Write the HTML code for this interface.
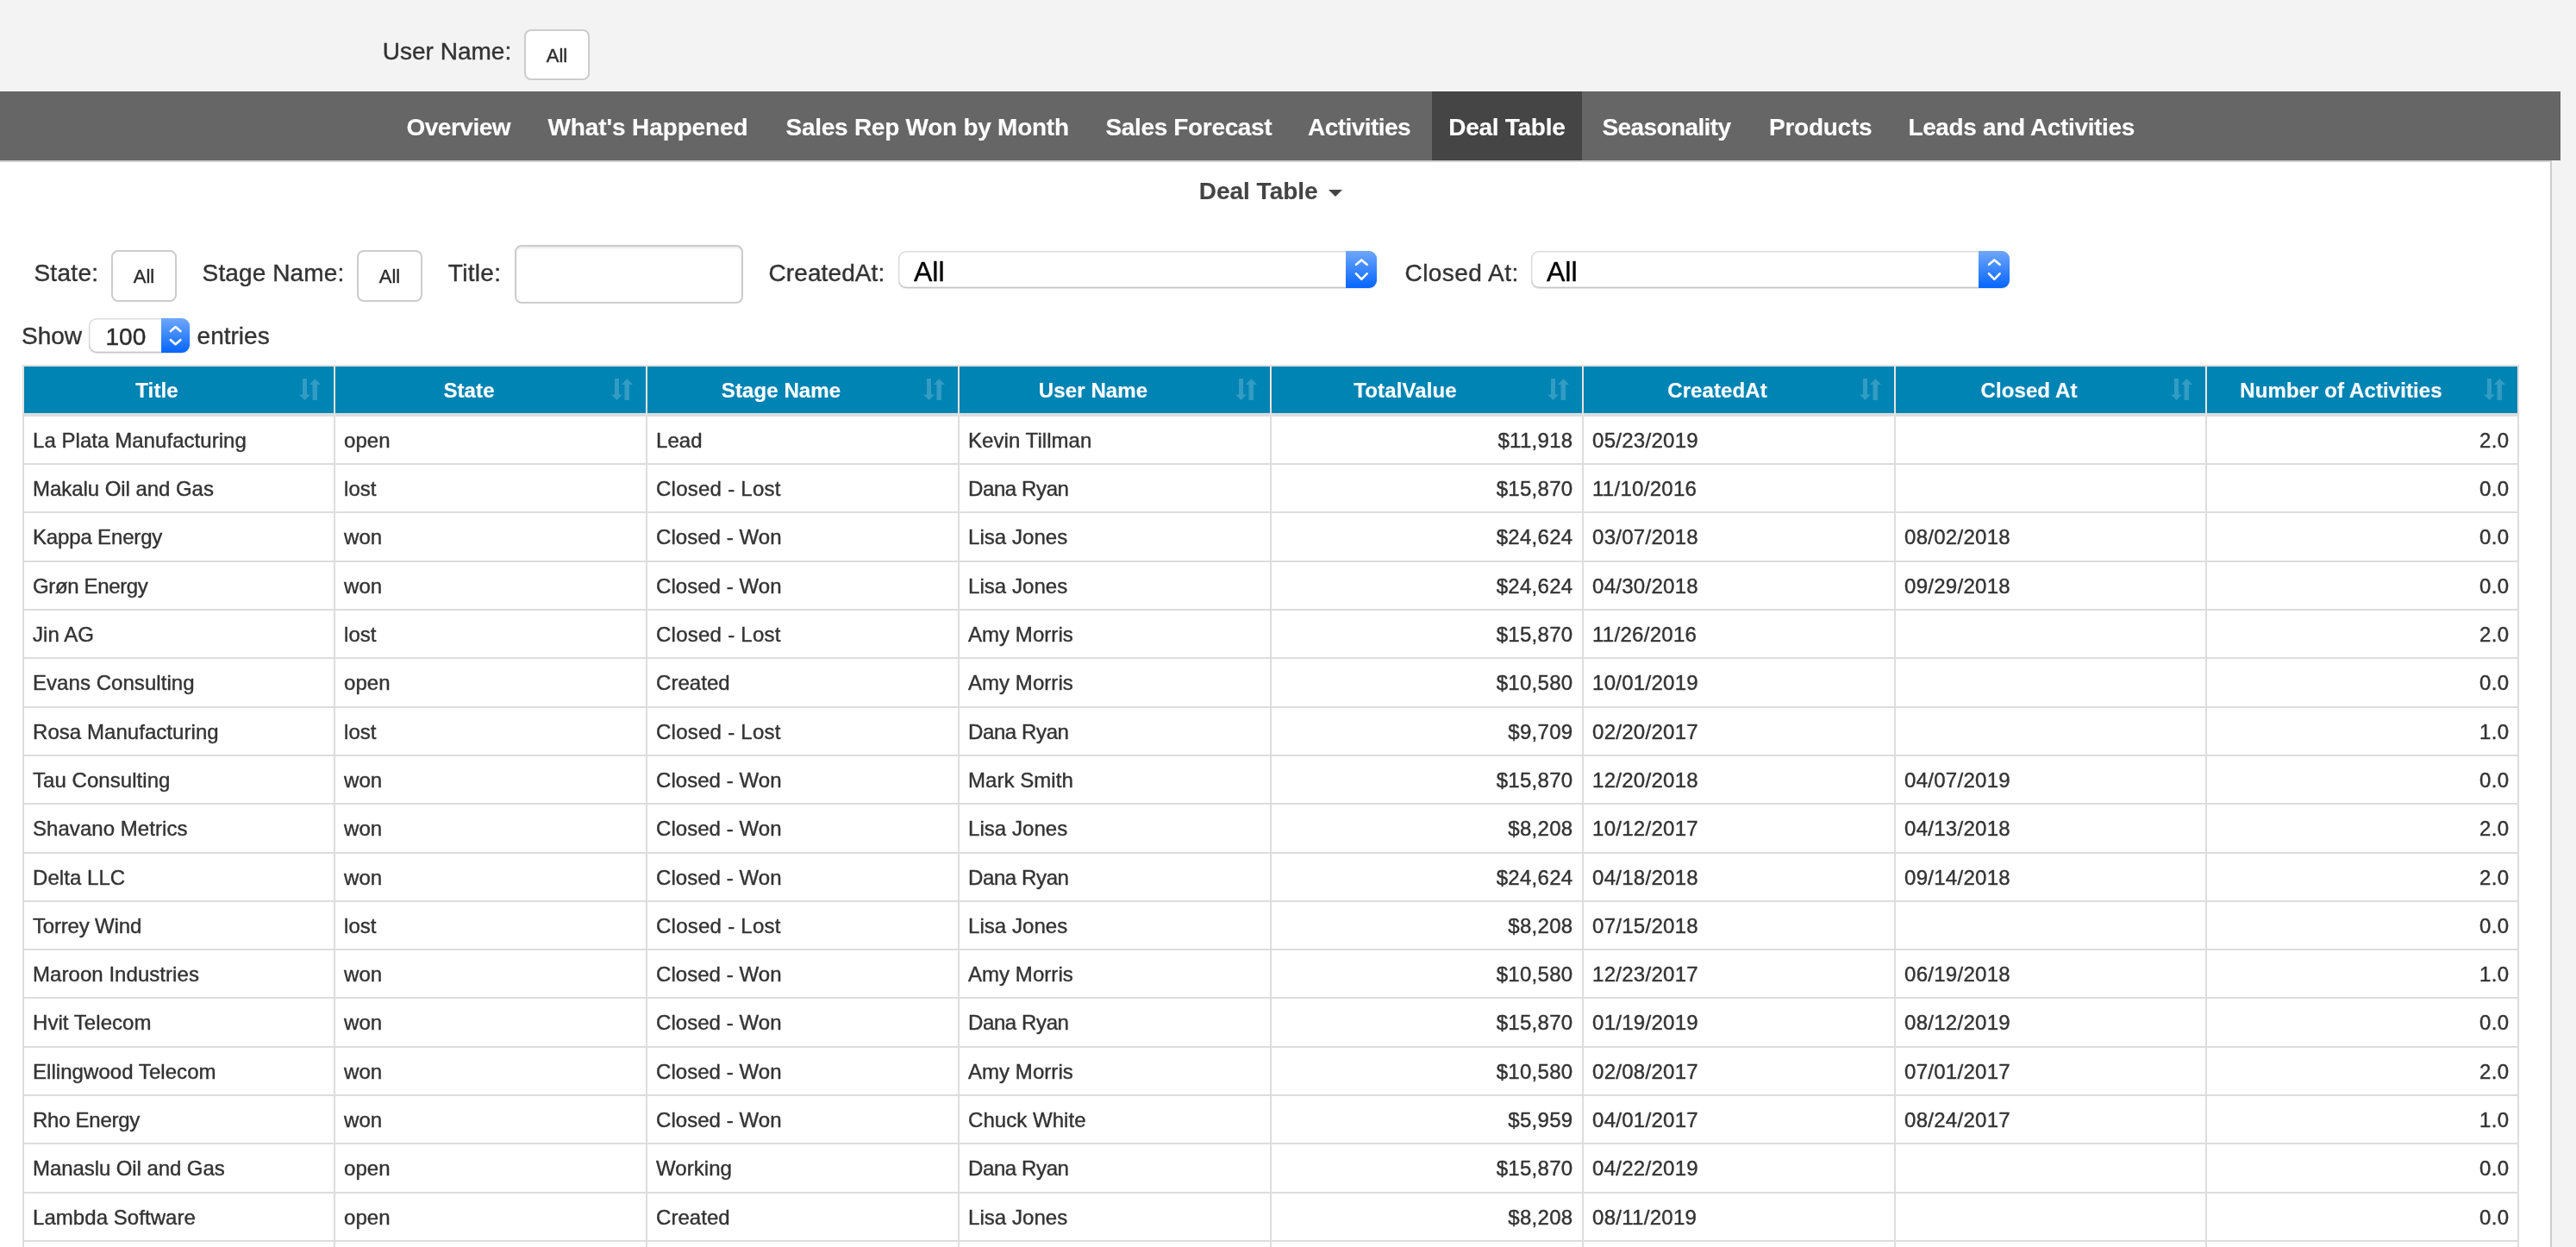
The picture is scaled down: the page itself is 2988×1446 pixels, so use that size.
<!DOCTYPE html>
<html lang="en"><head><meta charset="utf-8"><title>Deal Table</title>
<style>
*{box-sizing:border-box}
html,body{margin:0;padding:0}
body{width:2988px;height:1446px;overflow:hidden;background:#f3f3f3;font-family:"Liberation Sans",sans-serif;color:#333;position:relative;-webkit-text-stroke:0.4px currentColor}
.top{position:absolute;left:0;top:0;width:2988px;height:106px;will-change:transform}
.lbl{position:absolute;font-size:28px;line-height:28px;white-space:nowrap;color:#333}
.btn{position:absolute;width:76px;height:60px;border:2px solid #ccc;border-radius:8px;background:#fff;font-size:22px;line-height:22px;padding-top:17.9px;text-align:center;color:#2b2b2b}
.nav{position:absolute;left:0;top:106px;width:2970px;height:80px;background:#666;will-change:transform}
.ni{position:absolute;top:0;height:80px;padding:0 20px;font-size:28px;font-weight:700;line-height:83px;overflow:hidden;color:#fff;white-space:nowrap;letter-spacing:-0.45px;-webkit-text-stroke:.12px #fff}
.ni.act{background:#454545}
.panel{position:absolute;left:0;top:186px;width:2960px;height:1270px;background:#fff;border-top:2px solid #d2d2d2;border-right:2px solid #ccc}
.content{position:absolute;left:0;top:0;width:2960px;height:1446px;will-change:transform}
.ttl{position:absolute;left:1390.7px;top:207.5px;font-size:28px;font-weight:700;line-height:28px;color:#444;white-space:nowrap;-webkit-text-stroke:.12px #444}
.caret{position:absolute;left:150.3px;top:12.5px;width:0;height:0;border-left:8px solid transparent;border-right:8px solid transparent;border-top:8px solid #444}
.inp{position:absolute;width:265px;height:68px;border:2px solid #ccc;border-radius:8px;background:#fff;box-shadow:inset 0 2px 2px rgba(0,0,0,.075)}
.sel{position:absolute;background:#fff;border-radius:9px;box-shadow:inset 0 -1px 0 #c4c4c4,inset 0 0 0 1.5px #dcdcdc,0 1px 1.5px rgba(0,0,0,.12)}
.sel.big{width:555px;height:43px}
.sel.sm{width:117px;height:40px}
.sel .sv{position:absolute;white-space:nowrap}
.sel.big .sv{left:18px;top:7.5px;font-size:32px;line-height:32px;color:#000}
.sel.sm .sv{left:19.5px;top:8.2px;font-size:28px;line-height:28px;color:#2b2b2b}
.chev{position:absolute;right:0;top:0;width:36px;height:43px;border-radius:0 9px 9px 0;background:linear-gradient(#6fa7fb,#0565ff);overflow:hidden}
.chev.s{width:33px;height:40px}
.chev svg{position:absolute;left:0;top:0}
.chev path{fill:none;stroke:#fff;stroke-width:2.6;stroke-linecap:round;stroke-linejoin:round}
table.dt{position:absolute;left:26px;top:423px;width:2896px;border-collapse:separate;border-spacing:0;table-layout:fixed;font-size:24px;line-height:37px;color:#333}
.dt th,.dt td{border:0 solid #ddd;border-right-width:2px;border-bottom-width:2px;padding:0 10.6px 0 10px;letter-spacing:.05px;white-space:nowrap;overflow:hidden;text-align:left;font-weight:400;vertical-align:middle}
.dt th:first-child,.dt td:first-child{border-left-width:2px}
.dt th{height:60px;padding-top:1px;background:#0084b4;color:#fff;font-weight:700;text-align:center;padding-left:10px;padding-right:60px;position:relative;border-top:1px solid #ddd;border-bottom-width:4px;border-right-color:#ebe4e0;border-bottom-color:#ddd;box-shadow:inset 0 1px 0 #ebe4e0;letter-spacing:.1px;-webkit-text-stroke:.18px #fff}
.dt th:first-child{border-left:1px solid #ddd;box-shadow:inset 1px 1px 0 #ebe4e0}
.dt th:last-child{border-right:1px solid #ddd;box-shadow:inset -1px 1px 0 #ebe4e0}
.dt tr.h56 td{height:56px}
.dt tr.h57 td{height:57px}
.dt td.r{text-align:right}
.dt td.n{letter-spacing:.28px}
.dt td.r:last-child{padding-right:9.7px}
.srt{position:absolute;right:15px;top:15px;fill:rgba(255,255,255,.2)}

</style></head>
<body>
<div class="top"><span class="lbl" style="left:443.8px;top:45.5px">User Name:</span><span class="btn" style="left:608px;top:34px;height:59px">All</span></div>
<div class="nav">
<a class="ni" style="left:451.5px;letter-spacing:-0.5px">Overview</a>
<a class="ni" style="left:615.5px;letter-spacing:-0.12px">What's Happened</a>
<a class="ni" style="left:891.5px;letter-spacing:-0.26px">Sales Rep Won by Month</a>
<a class="ni" style="left:1262.5px;letter-spacing:-0.35px">Sales Forecast</a>
<a class="ni" style="left:1497.1px;letter-spacing:-0.57px">Activities</a>
<a class="ni act" style="left:1661px;width:174px;padding-left:19.3px;letter-spacing:-0.28px">Deal Table</a>
<a class="ni" style="left:1838.4px;letter-spacing:-0.59px">Seasonality</a>
<a class="ni" style="left:2032.0px;letter-spacing:-0.26px">Products</a>
<a class="ni" style="left:2193.4px;letter-spacing:-0.36px">Leads and Activities</a>
</div>
<div class="panel"></div>
<div class="content">
<div class="ttl"><span class="tt">Deal Table</span><span class="caret"></span></div>
<span class="lbl" style="left:39.4px;top:302.6px;letter-spacing:.3px">State:</span><span class="btn" style="left:129px;top:290px">All</span>
<span class="lbl" style="left:234.6px;top:302.6px;letter-spacing:.12px">Stage Name:</span><span class="btn" style="left:414px;top:290px">All</span>
<span class="lbl" style="left:519.8px;top:302.6px;letter-spacing:.3px">Title:</span><span class="inp" style="left:597px;top:284px"></span>
<span class="lbl" style="left:891.5px;top:302.6px;letter-spacing:.1px">CreatedAt:</span><span class="sel big" style="left:1042px;top:291px"><span class="sv">All</span><span class="chev"><svg width="36" height="43" viewBox="0 0 36 43"><path d="M12 15.8l6.3-5.4 6.3 5.4M12 26.3l6.3 6.5 6.3-6.5"/></svg></span></span>
<span class="lbl" style="left:1629.5px;top:302.6px;letter-spacing:.45px">Closed At:</span><span class="sel big" style="left:1776px;top:291px"><span class="sv">All</span><span class="chev"><svg width="36" height="43" viewBox="0 0 36 43"><path d="M12 15.8l6.3-5.4 6.3 5.4M12 26.3l6.3 6.5 6.3-6.5"/></svg></span></span>
<span class="lbl" style="left:25px;top:376.3px">Show</span><span class="sel sm" style="left:103px;top:369px"><span class="sv">100</span><span class="chev s"><svg width="33" height="40" viewBox="0 0 33 40"><path d="M10.9 15L16.6 10l5.7 5M10.9 25.2l5.7 5 5.7-5"/></svg></span></span><span class="lbl" style="left:228.6px;top:376.3px">entries</span>
<table class="dt"><colgroup><col style="width:363px"><col style="width:362px"><col style="width:362px"><col style="width:362px"><col style="width:362px"><col style="width:362px"><col style="width:361px"><col style="width:362px"></colgroup><thead><tr><th><span class="ht">Title</span><svg class="srt" width="25" height="25" viewBox="0 0 25 25"><path d="M4 0h5v18.5h4L6.5 25 0 18.5h4z"/><path d="M18.4 0L25 7h-4v18h-5.5V7H12z"/></svg></th><th><span class="ht">State</span><svg class="srt" width="25" height="25" viewBox="0 0 25 25"><path d="M4 0h5v18.5h4L6.5 25 0 18.5h4z"/><path d="M18.4 0L25 7h-4v18h-5.5V7H12z"/></svg></th><th><span class="ht">Stage Name</span><svg class="srt" width="25" height="25" viewBox="0 0 25 25"><path d="M4 0h5v18.5h4L6.5 25 0 18.5h4z"/><path d="M18.4 0L25 7h-4v18h-5.5V7H12z"/></svg></th><th><span class="ht">User Name</span><svg class="srt" width="25" height="25" viewBox="0 0 25 25"><path d="M4 0h5v18.5h4L6.5 25 0 18.5h4z"/><path d="M18.4 0L25 7h-4v18h-5.5V7H12z"/></svg></th><th><span class="ht">TotalValue</span><svg class="srt" width="25" height="25" viewBox="0 0 25 25"><path d="M4 0h5v18.5h4L6.5 25 0 18.5h4z"/><path d="M18.4 0L25 7h-4v18h-5.5V7H12z"/></svg></th><th><span class="ht">CreatedAt</span><svg class="srt" width="25" height="25" viewBox="0 0 25 25"><path d="M4 0h5v18.5h4L6.5 25 0 18.5h4z"/><path d="M18.4 0L25 7h-4v18h-5.5V7H12z"/></svg></th><th><span class="ht">Closed At</span><svg class="srt" width="25" height="25" viewBox="0 0 25 25"><path d="M4 0h5v18.5h4L6.5 25 0 18.5h4z"/><path d="M18.4 0L25 7h-4v18h-5.5V7H12z"/></svg></th><th><span class="ht">Number of Activities</span><svg class="srt" width="25" height="25" viewBox="0 0 25 25"><path d="M4 0h5v18.5h4L6.5 25 0 18.5h4z"/><path d="M18.4 0L25 7h-4v18h-5.5V7H12z"/></svg></th></tr></thead>
<tbody>
<tr class="h56"><td>La Plata Manufacturing</td><td>open</td><td>Lead</td><td>Kevin Tillman</td><td class="r n">$11,918</td><td class="n">05/23/2019</td><td class="n"></td><td class="r n">2.0</td></tr>
<tr class="h56"><td style="letter-spacing:-0.05px">Makalu Oil and Gas</td><td>lost</td><td style="letter-spacing:0.25px">Closed - Lost</td><td style="letter-spacing:-0.39px">Dana Ryan</td><td class="r n">$15,870</td><td class="n">11/10/2016</td><td class="n"></td><td class="r n">0.0</td></tr>
<tr class="h57"><td style="letter-spacing:-0.16px">Kappa Energy</td><td>won</td><td>Closed - Won</td><td>Lisa Jones</td><td class="r n">$24,624</td><td class="n">03/07/2018</td><td class="n">08/02/2018</td><td class="r n">0.0</td></tr>
<tr class="h56"><td style="letter-spacing:-0.36px">Grøn Energy</td><td>won</td><td>Closed - Won</td><td>Lisa Jones</td><td class="r n">$24,624</td><td class="n">04/30/2018</td><td class="n">09/29/2018</td><td class="r n">0.0</td></tr>
<tr class="h56"><td>Jin AG</td><td>lost</td><td style="letter-spacing:0.25px">Closed - Lost</td><td>Amy Morris</td><td class="r n">$15,870</td><td class="n">11/26/2016</td><td class="n"></td><td class="r n">2.0</td></tr>
<tr class="h57"><td>Evans Consulting</td><td>open</td><td>Created</td><td>Amy Morris</td><td class="r n">$10,580</td><td class="n">10/01/2019</td><td class="n"></td><td class="r n">0.0</td></tr>
<tr class="h56"><td>Rosa Manufacturing</td><td>lost</td><td style="letter-spacing:0.25px">Closed - Lost</td><td style="letter-spacing:-0.39px">Dana Ryan</td><td class="r n">$9,709</td><td class="n">02/20/2017</td><td class="n"></td><td class="r n">1.0</td></tr>
<tr class="h56"><td>Tau Consulting</td><td>won</td><td>Closed - Won</td><td>Mark Smith</td><td class="r n">$15,870</td><td class="n">12/20/2018</td><td class="n">04/07/2019</td><td class="r n">0.0</td></tr>
<tr class="h57"><td>Shavano Metrics</td><td>won</td><td>Closed - Won</td><td>Lisa Jones</td><td class="r n">$8,208</td><td class="n">10/12/2017</td><td class="n">04/13/2018</td><td class="r n">2.0</td></tr>
<tr class="h56"><td>Delta LLC</td><td>won</td><td>Closed - Won</td><td style="letter-spacing:-0.39px">Dana Ryan</td><td class="r n">$24,624</td><td class="n">04/18/2018</td><td class="n">09/14/2018</td><td class="r n">2.0</td></tr>
<tr class="h56"><td style="letter-spacing:-0.18px">Torrey Wind</td><td>lost</td><td style="letter-spacing:0.25px">Closed - Lost</td><td>Lisa Jones</td><td class="r n">$8,208</td><td class="n">07/15/2018</td><td class="n"></td><td class="r n">0.0</td></tr>
<tr class="h56"><td>Maroon Industries</td><td>won</td><td>Closed - Won</td><td>Amy Morris</td><td class="r n">$10,580</td><td class="n">12/23/2017</td><td class="n">06/19/2018</td><td class="r n">1.0</td></tr>
<tr class="h57"><td>Hvit Telecom</td><td>won</td><td>Closed - Won</td><td style="letter-spacing:-0.39px">Dana Ryan</td><td class="r n">$15,870</td><td class="n">01/19/2019</td><td class="n">08/12/2019</td><td class="r n">0.0</td></tr>
<tr class="h56"><td>Ellingwood Telecom</td><td>won</td><td>Closed - Won</td><td>Amy Morris</td><td class="r n">$10,580</td><td class="n">02/08/2017</td><td class="n">07/01/2017</td><td class="r n">2.0</td></tr>
<tr class="h56"><td style="letter-spacing:-0.27px">Rho Energy</td><td>won</td><td>Closed - Won</td><td>Chuck White</td><td class="r n">$5,959</td><td class="n">04/01/2017</td><td class="n">08/24/2017</td><td class="r n">1.0</td></tr>
<tr class="h57"><td style="letter-spacing:-0.08px">Manaslu Oil and Gas</td><td>open</td><td>Working</td><td style="letter-spacing:-0.39px">Dana Ryan</td><td class="r n">$15,870</td><td class="n">04/22/2019</td><td class="n"></td><td class="r n">0.0</td></tr>
<tr class="h56"><td>Lambda Software</td><td>open</td><td>Created</td><td>Lisa Jones</td><td class="r n">$8,208</td><td class="n">08/11/2019</td><td class="n"></td><td class="r n">0.0</td></tr>
<tr class="h56"><td></td><td></td><td></td><td></td><td class="r n"></td><td class="n"></td><td class="n"></td><td class="r n"></td></tr>
</tbody></table>
</div>
</body></html>
